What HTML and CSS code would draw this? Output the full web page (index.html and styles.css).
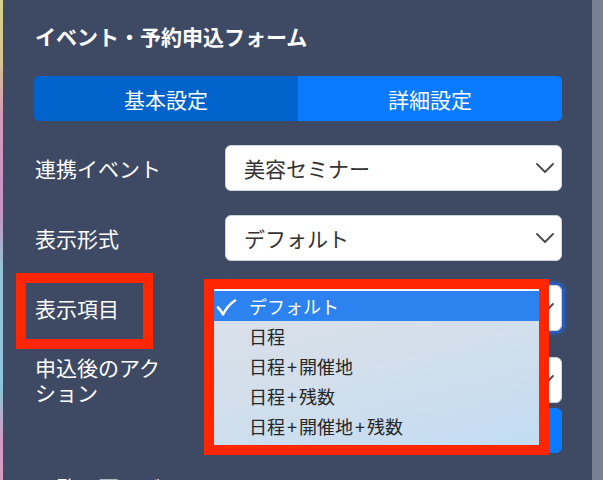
FILE: index.html
```html
<!DOCTYPE html>
<html lang="ja">
<head>
<meta charset="utf-8">
<title>イベント・予約申込フォーム</title>
<link rel="stylesheet" href="styles.css">
</head>
<body>
  <div class="edge-left"></div>
  <main class="panel">
    <h1 class="title">イベント・予約申込フォーム</h1>
    <div class="tabs">
      <div class="tab tab-active">基本設定</div>
      <div class="tab">詳細設定</div>
    </div>
    <div class="row">
      <div class="label">連携イベント</div>
      <div class="select"><span>美容セミナー</span><svg class="chev" width="18" height="10" viewBox="0 0 18 10"><polyline points="1,1 9,9 17,1"/></svg></div>
    </div>
    <div class="row">
      <div class="label">表示形式</div>
      <div class="select"><span>デフォルト</span><svg class="chev" width="18" height="10" viewBox="0 0 18 10"><polyline points="1,1 9,9 17,1"/></svg></div>
    </div>
    <div class="row">
      <div class="label">表示項目</div>
      <div class="select select-focus"><span>デフォルト</span><svg class="chev" width="18" height="10" viewBox="0 0 18 10"><polyline points="1,1 9,9 17,1"/></svg></div>
    </div>
    <div class="row">
      <div class="label">申込後のアクション</div>
      <div class="select"><span>メッセージを表示</span><svg class="chev" width="18" height="10" viewBox="0 0 18 10"><polyline points="1,1 9,9 17,1"/></svg></div>
    </div>
    <div class="row row-tight">
      <div class="label"></div>
      <div class="button">設定</div>
    </div>
    <div class="row row-last">
      <div class="label">ー覧に戻るボタン</div>
      <div></div>
    </div>
  </main>
  <div class="edge-right"></div>

  <div class="menu">
    <div class="menu-item menu-item-on"><svg class="check" width="21" height="17" viewBox="0 0 21 17"><path d="M2 8.5 C4 10.5 5.5 12.5 7 15.5 C10 9.5 13.5 5 19 1.5"/></svg>デフォルト</div>
    <div class="menu-item">日程</div>
    <div class="menu-item">日程<span class="plus">+</span>開催地</div>
    <div class="menu-item">日程<span class="plus">+</span>残数</div>
    <div class="menu-item">日程<span class="plus">+</span>開催地<span class="plus">+</span>残数</div>
  </div>
  <div class="mark mark-label"></div>
  <div class="mark mark-menu"></div>
</body>
</html>
```

FILE: styles.css
```css
html, body {
  margin: 0;
  padding: 0;
}
body {
  width: 603px;
  height: 480px;
  overflow: hidden;
  display: flex;
  position: relative;
  font-family: "Noto Sans CJK JP", "Noto Sans", sans-serif;
  background: #3e4a63;
}
.edge-left {
  width: 3px;
  flex-shrink: 0;
  background: linear-gradient(180deg, #d9d28c 0px, #d8c590 60px, #d79ab9 115px, #c993c8 210px, #93c3d6 270px, #8fc4d6 390px, #d49ac6 440px, #d99cc0 480px);
}
.edge-right {
  width: 11px;
  flex-shrink: 0;
  background: #798093;
}
.panel {
  flex: 1;
  padding: 22px 30px 0 31px;
  background: #3e4a63;
}
.title {
  margin: 0;
  font-size: 21px;
  line-height: 28px;
  font-weight: 700;
  color: #ffffff;
  padding-left: 1px;
}
.tabs {
  margin-top: 26px;
  display: flex;
  height: 45px;
  border-radius: 5px;
  overflow: hidden;
}
.tab {
  flex: 1;
  display: flex;
  align-items: center;
  justify-content: center;
  font-size: 21px;
  color: #ffffff;
  background: #0a7aff;
}
.tab-active {
  background: #0062cb;
}
.row {
  margin-top: 24px;
  display: grid;
  grid-template-columns: 130px 337px;
  justify-content: space-between;
  align-items: center;
}
.label {
  font-size: 21px;
  line-height: 25px;
  color: #ffffff;
  padding-left: 1px;
}
.select {
  height: 46px;
  box-sizing: border-box;
  background: #ffffff;
  border: 1px solid #cfd4dc;
  border-radius: 6px;
  display: flex;
  align-items: center;
  justify-content: space-between;
  padding: 0 7px 0 18px;
  font-size: 21px;
  color: #333333;
}
.select-focus {
  box-shadow: 0 0 0 3px rgba(38, 98, 196, 0.8), 0 0 5px 4px rgba(38, 98, 196, 0.45);
}
.chev polyline {
  fill: none;
  stroke: #4a4a4a;
  stroke-width: 1.8;
  stroke-linecap: round;
  stroke-linejoin: round;
}
.row-tight {
  margin-top: 3px;
}
.button {
  height: 45px;
  border-radius: 6px;
  background: #0a7aff;
  color: #ffffff;
  font-size: 21px;
  display: flex;
  align-items: center;
  justify-content: center;
}
.row-last {
  margin-top: 22px;
  align-items: start;
}
.menu {
  position: absolute;
  left: 211px;
  top: 289px;
  width: 334px;
  height: 160px;
  box-sizing: border-box;
  border-top: 2px solid #eef2f7;
  background: linear-gradient(165deg, #dbe0e8 0%, #d3dfeb 45%, #c2dcf3 100%);
}
.menu-item {
  height: 30px;
  display: flex;
  align-items: center;
  padding-left: 38px;
  position: relative;
  font-size: 18px;
  color: #262626;
}
.plus {
  padding: 0 2px;
}
.menu-item-on {
  background: #2c82ee;
  color: #ffffff;
}
.check {
  position: absolute;
  left: 5px;
  top: 8px;
}
.check path {
  fill: none;
  stroke: #ffffff;
  stroke-width: 2.6;
  stroke-linecap: round;
  stroke-linejoin: round;
}
.mark {
  position: absolute;
  box-sizing: border-box;
  border: 10px solid #ff2600;
}
.mark-label {
  left: 16px;
  top: 273px;
  width: 137px;
  height: 76px;
}
.mark-menu {
  left: 204px;
  top: 279px;
  width: 345px;
  height: 176px;
}
```
